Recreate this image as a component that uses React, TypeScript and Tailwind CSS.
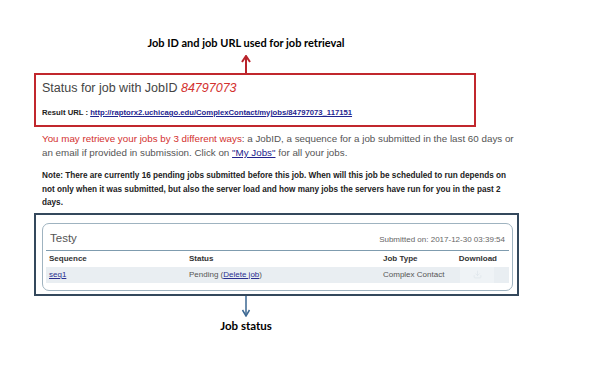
import { Download } from 'lucide-react';

const callout = { fontFamily: 'Lato, "Open Sans", sans-serif' };

function UpArrow() {
  return (
    <svg width="12" height="18" viewBox="0 0 12 18" className="block">
      <line x1="6" y1="3" x2="6" y2="18" stroke="#b8232b" strokeWidth="2" />
      <path d="M2 7 L6 1 L10 7" fill="none" stroke="#b8232b" strokeWidth="2" />
    </svg>
  );
}

function DownArrow() {
  return (
    <svg width="12" height="21" viewBox="0 0 12 21" className="block">
      <line x1="6" y1="0" x2="6" y2="18" stroke="#3b6792" strokeWidth="1.5" />
      <path d="M2.5 14 L6 20 L9.5 14" fill="none" stroke="#3b6792" strokeWidth="1.5" />
    </svg>
  );
}

export default function App() {
  return (
    <div
      className="w-[600px] h-[366px] bg-white overflow-hidden"
      style={{ fontFamily: '"Liberation Sans", Arial, sans-serif' }}
    >
      {/* top callout */}
      <div className="w-[492px] pt-[36px] flex flex-col items-center">
        <div className="text-[11px] leading-[14px] font-bold text-black" style={callout}>
          Job ID and job URL used for job retrieval
        </div>
        <div className="mt-[5px]">
          <UpArrow />
        </div>
      </div>

      <div className="pl-[34px]">
        {/* job id box */}
        <div className="w-[442px] h-[54px] border-2 border-[#c1272d] pl-[6px] pt-[6px]">
          <div className="text-[12.5px] leading-[15px] text-[#444]">
            Status for job with JobID <span className="italic text-[#d3312f]">84797073</span>
          </div>
          <div className="mt-[12px] text-[7.7px] leading-[10px] font-bold text-[#222]">
            Result URL :{' '}
            <a className="text-[#1f2590] underline" href="#">
              http://raptorx2.uchicago.edu/ComplexContact/myjobs/84797073_117151
            </a>
          </div>
        </div>

        {/* info text */}
        <p className="mt-[5px] pl-[8px] w-[490px] text-[9.8px] leading-[14px] text-[#555]">
          <span className="text-[#d3312f]">You may retrieve your jobs by 3 different ways</span>: a JobID, a
          sequence for a job submitted in the last 60 days or an email if provided in submission. Click on{' '}
          <a className="text-[#23238c] underline" href="#">"My Jobs"</a> for all your jobs.
        </p>

        <p className="mt-[9px] pl-[8px] w-[475px] text-[8.2px] leading-[13.5px] font-bold text-[#222]">
          Note: There are currently 16 pending jobs submitted before this job. When will this job be scheduled
          to run depends on not only when it was submitted, but also the server load and how many jobs the
          servers have run for you in the past 2 days.
        </p>

        {/* job status box */}
        <div className="mt-[3px] w-[485px] h-[83px] border-2 border-[#34485c] pl-[6px] pr-[4px] pt-[8px]">
          <div className="h-[68px] border border-[#9fb3c0] rounded-[7px] px-[3px]">
            <div className="flex items-end justify-between h-[27px] pb-[5px] pl-[4px] pr-[4px] border-b border-[#7f9caf]">
              <span className="text-[11.5px] leading-[14px] text-[#555]">Testy</span>
              <span className="text-[8px] leading-[10px] text-[#666]">Submitted on: 2017-12-30 03:39:54</span>
            </div>
            <div className="grid grid-cols-[143px_194px_1fr] h-[16px] items-center text-[8px] font-bold text-[#333]">
              <span className="pl-[3px]">Sequence</span>
              <span>Status</span>
              <span className="flex justify-between pr-[12px]">
                <span>Job Type</span>
                <span>Download</span>
              </span>
            </div>
            <div className="grid grid-cols-[143px_194px_1fr] h-[16px] items-center text-[8px] text-[#555] bg-[#e9eef2]">
              <a className="pl-[3px] text-[#2a2f8f] underline" href="#">seq1</a>
              <span>
                Pending (<a className="text-[#2a2f8f] underline" href="#">Delete job</a>)
              </span>
              <span className="flex items-center justify-between h-full pr-[15px]">
                <span>Complex Contact</span>
                <span className="flex items-center justify-center w-[34px] h-full bg-[#eff3f6]">
                  <Download className="w-[9px] h-[9px] text-[#dfe6eb]" strokeWidth={2} />
                </span>
              </span>
            </div>
          </div>
        </div>
      </div>

      {/* bottom callout */}
      <div className="w-[492px] flex flex-col items-center">
        <DownArrow />
        <div className="mt-[2px] text-[11.5px] leading-[14px] font-bold text-black" style={callout}>
          Job status
        </div>
      </div>
    </div>
  );
}
